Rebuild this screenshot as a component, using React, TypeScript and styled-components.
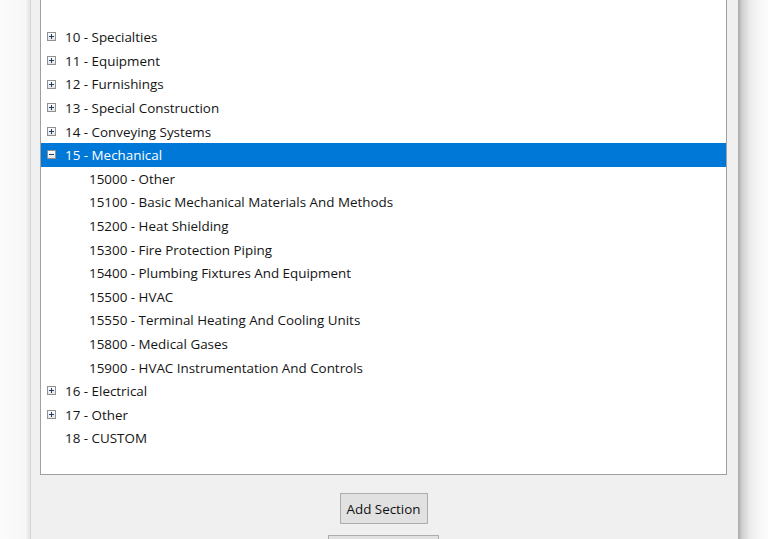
import React from 'react'
import styled, { createGlobalStyle } from 'styled-components'

const GlobalStyle = createGlobalStyle`
  html, body {
    margin: 0;
    padding: 0;
    background: #fafafa;
    overflow: hidden;
  }
  body {
    font-family: 'Open Sans', 'Noto Sans', sans-serif;
  }
`

interface Node {
  label: string
  expandable?: boolean
  expanded?: boolean
  selected?: boolean
  children?: string[]
}

const tree: Node[] = [
  { label: '10 - Specialties', expandable: true },
  { label: '11 - Equipment', expandable: true },
  { label: '12 - Furnishings', expandable: true },
  { label: '13 - Special Construction', expandable: true },
  { label: '14 - Conveying Systems', expandable: true },
  {
    label: '15 - Mechanical',
    expandable: true,
    expanded: true,
    selected: true,
    children: [
      '15000 - Other',
      '15100 - Basic Mechanical Materials And Methods',
      '15200 - Heat Shielding',
      '15300 - Fire Protection Piping',
      '15400 - Plumbing Fixtures And Equipment',
      '15500 - HVAC',
      '15550 - Terminal Heating And Cooling Units',
      '15800 - Medical Gases',
      '15900 - HVAC Instrumentation And Controls',
    ],
  },
  { label: '16 - Electrical', expandable: true },
  { label: '17 - Other', expandable: true },
  { label: '18 - CUSTOM' },
]

const Page = styled.div`
  display: flex;
  height: 539px;
  width: 768px;
  overflow: hidden;
`

const LeftShade = styled.div`
  width: 30px;
  flex: none;
  background: linear-gradient(to right, #fbfbfb 0%, #f7f7f7 85%, #e2e2e2 100%);
`

const RightShade = styled.div`
  width: 30px;
  flex: none;
  background: linear-gradient(to right, #a9a9a9 0px, #cfcfcf 4px, #ececec 12px, #f9f9f9 24px, #fbfbfb 100%);
`

const Window = styled.div`
  width: 708px;
  height: 539px;
  flex: none;
  background: #f0f0f0;
  border-left: 1px solid #d6d6d6;
  box-sizing: border-box;
  padding: 0 11px 0 9px;
  display: flex;
  flex-direction: column;
  overflow: hidden;
`

const TreeBox = styled.div`
  height: 475px;
  flex: none;
  box-sizing: border-box;
  background: #fff;
  border: 1px solid #a0a0a0;
  border-top: none;
  padding-top: 25.2px;
`

const Row = styled.div<{ $selected?: boolean; $depth: number }>`
  height: 23.6px;
  display: flex;
  align-items: center;
  padding-left: ${p => (p.$depth === 0 ? 6 : 48)}px;
  font-size: 13.4px;
  color: ${p => (p.$selected ? '#fff' : '#141414')};
  background: ${p => (p.$selected ? '#0078d7' : 'transparent')};
  white-space: nowrap;
`

const Toggle = styled.span<{ $hidden?: boolean }>`
  width: 9px;
  height: 9px;
  box-sizing: border-box;
  border: 1px solid #919191;
  background: linear-gradient(#ffffff, #e4e4e4);
  margin-right: 9px;
  position: relative;
  flex: none;
  visibility: ${p => (p.$hidden ? 'hidden' : 'visible')};
`

const Bar = styled.span<{ $vertical?: boolean }>`
  position: absolute;
  background: #1e3f6e;
  ${p =>
    p.$vertical
      ? 'left: 3px; top: 1px; width: 1px; height: 5px;'
      : 'left: 1px; top: 3px; width: 5px; height: 1px;'}
`

const Label = styled.span`
  line-height: 1;
  padding-top: 2px;
`

const ButtonArea = styled.div`
  display: flex;
  flex-direction: column;
  align-items: center;
  gap: 11px;
  padding-top: 18px;
  flex: none;
`

const Button = styled.button<{ $width: number }>`
  width: ${p => p.$width}px;
  height: 31px;
  box-sizing: border-box;
  background: #e1e1e1;
  border: 1px solid #adadad;
  font-family: 'Open Sans', 'Noto Sans', sans-serif;
  font-size: 13.4px;
  color: #111;
  padding: 0;
  flex: none;
`

function TreeRow({ node }: { node: Node }) {
  return (
    <>
      <Row $depth={0} $selected={node.selected}>
        <Toggle $hidden={!node.expandable}>
          <Bar />
          {!node.expanded && <Bar $vertical />}
        </Toggle>
        <Label>{node.label}</Label>
      </Row>
      {node.expanded &&
        node.children?.map(c => (
          <Row key={c} $depth={1}>
            <Label>{c}</Label>
          </Row>
        ))}
    </>
  )
}

export default function App() {
  return (
    <>
      <GlobalStyle />
      <Page>
        <LeftShade />
        <Window>
          <TreeBox>
            {tree.map(n => (
              <TreeRow key={n.label} node={n} />
            ))}
          </TreeBox>
          <ButtonArea>
            <Button $width={88}>Add Section</Button>
            {/* next button is cut off at the bottom edge; its caption is not visible */}
            <Button $width={111} aria-label="Remove Section" />
          </ButtonArea>
        </Window>
        <RightShade />
      </Page>
    </>
  )
}
